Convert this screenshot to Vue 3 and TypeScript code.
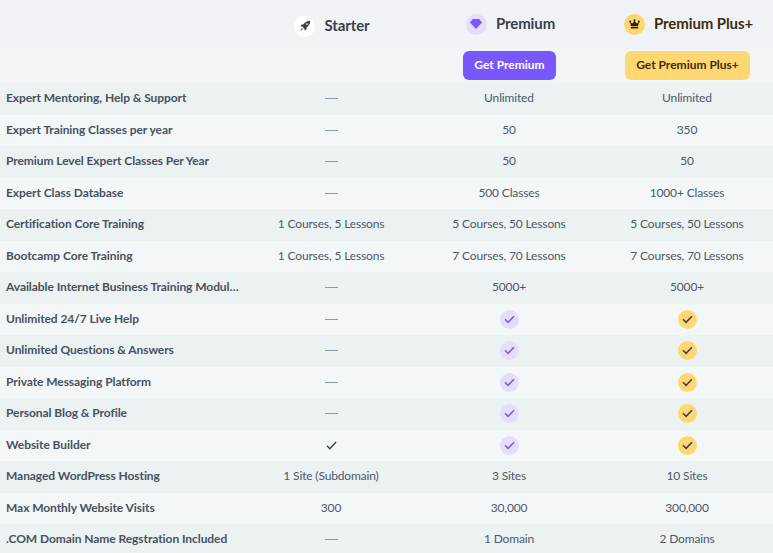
<script setup lang="ts">
type Val = string | { icon: 'dash' | 'check' }
const dash: Val = { icon: 'dash' }
const check: Val = { icon: 'check' }
const rows: { label: string; cells: Val[] }[] = [
  { label: 'Expert Mentoring, Help & Support', cells: [dash, 'Unlimited', 'Unlimited'] },
  { label: 'Expert Training Classes per year', cells: [dash, '50', '350'] },
  { label: 'Premium Level Expert Classes Per Year', cells: [dash, '50', '50'] },
  { label: 'Expert Class Database', cells: [dash, '500 Classes', '1000+ Classes'] },
  { label: 'Certification Core Training', cells: ['1 Courses, 5 Lessons', '5 Courses, 50 Lessons', '5 Courses, 50 Lessons'] },
  { label: 'Bootcamp Core Training', cells: ['1 Courses, 5 Lessons', '7 Courses, 70 Lessons', '7 Courses, 70 Lessons'] },
  { label: 'Available Internet Business Training Modules', cells: [dash, '5000+', '5000+'] },
  { label: 'Unlimited 24/7 Live Help', cells: [dash, check, check] },
  { label: 'Unlimited Questions & Answers', cells: [dash, check, check] },
  { label: 'Private Messaging Platform', cells: [dash, check, check] },
  { label: 'Personal Blog & Profile', cells: [dash, check, check] },
  { label: 'Website Builder', cells: [check, check, check] },
  { label: 'Managed WordPress Hosting', cells: ['1 Site (Subdomain)', '3 Sites', '10 Sites'] },
  { label: 'Max Monthly Website Visits', cells: ['300', '30,000', '300,000'] },
  { label: '.COM Domain Name Regstration Included', cells: [dash, '1 Domain', '2 Domains'] },
]
const isIcon = (v: Val, name: string) => typeof v !== 'string' && v.icon === name
</script>

<template>
  <div class="page">
    <header class="head">
      <div></div>
      <div class="plan plan-starter">
        <div class="title">
          <span class="badge badge-white">
            <svg viewBox="0 0 12 12" width="12" height="12">
              <path fill="#39414d" d="M11.200.8C8.800.7 6.900 1.700 5.400 3.300L4.300 4.500 2.500 4.600 1.400 6.200l1.900.4 2.100 2.100.4 1.900 1.600-1.100.1-1.800 1.200-1.100c1.600-1.500 2.600-3.400 2.500-5.800z" />
              <circle cx="7.900" cy="4.100" r="0.900" fill="#fff" />
              <path fill="#6d7684" d="M2.900 7.700 1 11l3.300-1.900z" />
            </svg>
          </span>
          <span class="name">Starter</span>
        </div>
      </div>
      <div class="plan">
        <div class="title title-shift">
          <span class="badge badge-purple">
            <svg viewBox="0 0 12 10" width="12" height="10">
              <path fill="#7857fb" d="M2.800 0h6.400L12 3.400 6 10 0 3.400z" />
            </svg>
          </span>
          <span class="name">Premium</span>
        </div>
        <button class="cta cta-purple"><span class="lift">Get Premium</span></button>
      </div>
      <div class="plan">
        <div class="title title-shift">
          <span class="badge badge-yellow">
            <svg viewBox="0 0 14 12" width="11" height="10">
              <path fill="#2f2208" d="M2.400 8.500 1.500 3.700l2.900 1.800L7 1.500l2.600 4 2.900-1.800-.9 4.800z" />
              <circle cx="1.500" cy="3" r="1.300" fill="#2f2208" />
              <circle cx="7" cy="1.300" r="1.300" fill="#2f2208" />
              <circle cx="12.500" cy="3" r="1.300" fill="#2f2208" />
              <rect x="2.400" y="9.500" width="9.200" height="2.200" fill="#2f2208" />
            </svg>
          </span>
          <span class="name name-dark">Premium Plus+</span>
        </div>
        <button class="cta cta-yellow"><span class="lift">Get Premium Plus+</span></button>
      </div>
    </header>

    <div v-for="(row, i) in rows" :key="row.label" class="row" :class="{ alt: i % 2 === 0 }">
      <div class="label">{{ row.label }}</div>
      <div v-for="(cell, c) in row.cells" :key="c" class="cell">
        <span v-if="isIcon(cell, 'dash')" class="dash"></span>
        <svg v-else-if="isIcon(cell, 'check') && c === 0" class="tick" viewBox="0 0 12 10" width="11" height="9">
          <path d="M1 5.200 4.200 8.500 11 1.200" fill="none" stroke="#39414d" stroke-width="1.600" />
        </svg>
        <span v-else-if="isIcon(cell, 'check')" class="round" :class="c === 1 ? 'round-purple' : 'round-yellow'">
          <svg viewBox="0 0 12 10" width="11" height="9">
            <path d="M1 4.800 4.400 8.200 11 1.400" fill="none" :stroke="c === 1 ? '#7857fb' : '#39414d'" stroke-width="1.700" />
          </svg>
        </span>
        <span v-else class="lift">{{ cell }}</span>
      </div>
    </div>
  </div>
</template>

<style>
html, body { margin: 0; background: #f3f7f8; }
</style>

<style scoped>
.page {
  width: 773px;
  height: 553px;
  overflow: hidden;
  font-family: Lato, "Liberation Sans", sans-serif;
  background: #f3f7f8;
}
.head, .row {
  display: grid;
  grid-template-columns: 242px 178px 178px 178px;
  width: 776px;
}
.head {
  height: 83px;
  background: linear-gradient(180deg, #eff2f6 0%, #f3f6f8 100%);
}
.plan {
  display: flex;
  flex-direction: column;
  align-items: center;
  padding-top: 14px;
}
.plan-starter { padding-top: 16px; }
.title {
  display: flex;
  align-items: center;
  gap: 9px;
  height: 20px;
  padding-left: 2px;
}
.title-shift { padding-left: 3px; }
.badge {
  width: 21px;
  height: 21px;
  border-radius: 50%;
  display: flex;
  align-items: center;
  justify-content: center;
  flex: none;
}
.badge-white { background: #fff; }
.badge-purple { background: #e4defc; }
.badge-yellow { background: #ffd772; }
.name {
  font-size: 15px;
  font-weight: 700;
  letter-spacing: -0.1px;
  color: #39414d;
  padding-bottom: 2px;
}
.name-dark { color: #3d2c0c; }
.lift {
  display: block;
  padding-bottom: 2px;
}
.cta {
  margin-top: 17px;
  margin-left: 1px;
  height: 29px;
  padding: 0 11.250px;
  border: 0;
  border-radius: 6px;
  font: 700 12px Lato, "Liberation Sans", sans-serif;
}
.cta-purple { background: #7857fb; color: #fff; }
.cta-yellow { background: #ffd772; color: #3d2c0c; }
.row {
  height: 31.500px;
  align-items: center;
  background: #f3f7f8;
}
.row.alt { background: #ecf1f2; }
.label {
  padding-left: 6px;
  padding-right: 2px;
  padding-bottom: 2px;
  font-size: 12px;
  font-weight: 700;
  letter-spacing: -0.07px;
  color: #47525f;
  white-space: nowrap;
  overflow: hidden;
  text-overflow: ellipsis;
}
.cell {
  display: flex;
  align-items: center;
  justify-content: center;
  font-size: 12px;
  letter-spacing: -0.15px;
  color: #4d5968;
}
.dash {
  width: 13px;
  height: 1px;
  background: #8b9bb0;
}
.round {
  width: 19px;
  height: 19px;
  border-radius: 50%;
  display: flex;
  align-items: center;
  justify-content: center;
}
.round-purple { background: #e4defc; }
.round-yellow { background: #ffd772; }
</style>
